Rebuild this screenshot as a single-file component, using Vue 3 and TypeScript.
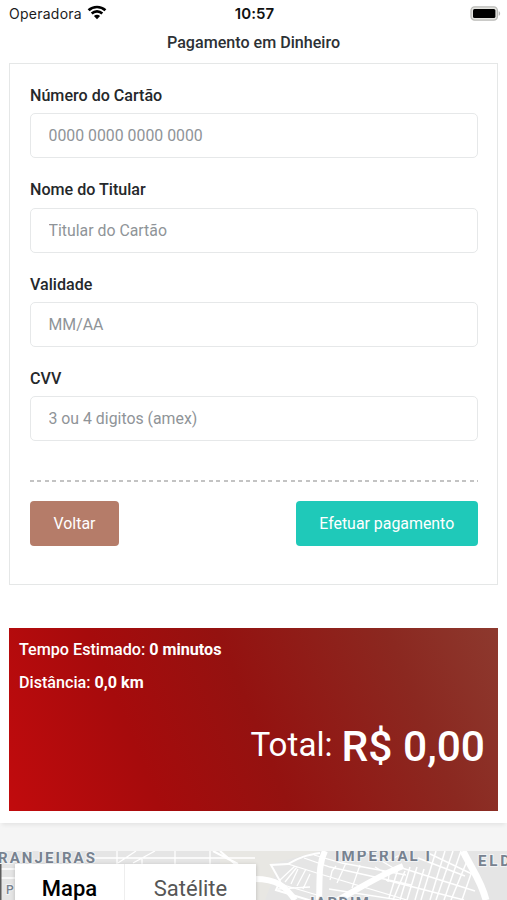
<script setup lang="ts">
import { ref } from 'vue'

interface Field {
  id: string
  label: string
  placeholder: string
}

const fields: Field[] = [
  { id: 'numero', label: 'Número do Cartão', placeholder: '0000 0000 0000 0000' },
  { id: 'titular', label: 'Nome do Titular', placeholder: 'Titular do Cartão' },
  { id: 'validade', label: 'Validade', placeholder: 'MM/AA' },
  { id: 'cvv', label: 'CVV', placeholder: '3 ou 4 digitos (amex)' },
]

const values = ref<Record<string, string>>({ numero: '', titular: '', validade: '', cvv: '' })
</script>

<template>
  <div class="screen">
    <header class="status">
      <div class="carrier">
        <span>Operadora</span>
        <svg class="wifi" width="20" height="15" viewBox="0 0 20 15" fill="none" stroke="#000">
          <path d="M1.600 5.300C6.200.9 13.800.9 18.400 5.300" stroke-width="2.700" />
          <path d="M4.700 8.500c3-2.900 7.600-2.900 10.600 0" stroke-width="2.600" />
          <path d="M10 14.200 6.900 11.100c1.800-1.700 4.400-1.700 6.200 0z" fill="#000" stroke="none" />
        </svg>
      </div>
      <span class="clock">10:57</span>
      <svg class="battery" width="31" height="15" viewBox="0 0 31 15">
        <rect x="1" y="0.900" width="26.400" height="13.200" rx="3.600" fill="#e4e4e0" stroke="#b9b9b6" stroke-width="1.300" />
        <rect x="3" y="3" width="22.400" height="9" rx="1.500" fill="#000" />
        <path d="M28.700 5.200c1.900.6 1.900 4 0 4.600z" fill="#b5b5b2" />
      </svg>
    </header>

    <main class="sheet">
      <h1 class="title">Pagamento em Dinheiro</h1>

      <form class="card" @submit.prevent>
        <div v-for="field in fields" :key="field.id" class="field">
          <label class="label" :for="field.id">{{ field.label }}</label>
          <input :id="field.id" v-model="values[field.id]" class="input" type="text" :placeholder="field.placeholder" />
        </div>
        <div class="rule"></div>
        <div class="actions">
          <button type="button" class="btn back">Voltar</button>
          <button type="submit" class="btn pay">Efetuar pagamento</button>
        </div>
      </form>

      <section class="summary">
        <p class="info">Tempo Estimado: <b>0 minutos</b></p>
        <p class="info">Distância: <b>0,0 km</b></p>
        <p class="total"><span class="total-label">Total:</span> <span class="amount">R$ 0,00</span></p>
      </section>
    </main>

    <section class="map">
      <svg class="streets" width="507" height="49" viewBox="0 0 507 49">
        <rect width="507" height="49" fill="#e5e5e5" />
        <path d="M220 0h100L271 13l4 10-10 26H220z" fill="#e8e7e3" />
        <g fill="none" stroke="#fff" stroke-width="1.300">
          <path d="M94 7h161M0 18h15M0 27h15M117 0v13M118 12l18-12M133 12l22-12M142 8v5M175 0v13M210 0v13" />
          <path d="M213 0l25 13M220 0l15 13" stroke-width="2" />
          <path d="M320 2c-13 2-20 4-32 11l-17 1 9 16-4 9 36 11" stroke-width="2" />
          <path d="M288 13l32 10 87 26M280 29l15-14M285 31l12-15M291 33l7-15M297 35l9-17M303 38l7-15M304 7l26 9 81 18M314 4l28 8 64 12M278 38l32-2M277 32l40 12M330 29l2-9 4-5M329 38l70 11M346 12l-9 20M360 14l-8 23M375 16l14 8-1 7M386 11l18-9M365 0l30 18" />
          <path d="M398 18l-9 29M405 20l-12 29M410 16l-10 33M417 16l-10 33M424 18l-9 31M436 0l-15 49M445 0l-15 49M453 0l-17 49M461 0l-17 49M467 10l-16 39M472 20l-10 29M386 29l78 20M402 17l73 23M426 1l46 22M418 7l47 18" stroke-width="1.500" />
        </g>
        <g fill="none" stroke="#fff">
          <path d="M325 0c-7 14-5 30-6 49" stroke-width="6" />
          <path d="M255 28c22 0 30 7 40 21M403 15C382 23 358 38 338 49" stroke-width="6" />
          <path d="M463 0c8 17 18 29 23 49" stroke-width="7" />
        </g>
        <path d="M0.500 0v49" stroke="#5d5d5d" stroke-width="2" />
        <g class="places">
          <text x="-2" y="11.500" textLength="97">RANJEIRAS</text>
          <text x="335" y="10" textLength="95">IMPERIAL I</text>
          <text x="478" y="15" textLength="45">ELDO</text>
          <text x="306" y="57" textLength="63">JARDIM</text>
          <text x="6" y="43" class="small">P</text>
        </g>
      </svg>
      <div class="map-types">
        <button type="button" class="map-type active">Mapa</button>
        <button type="button" class="map-type">Satélite</button>
      </div>
    </section>
  </div>
</template>

<style>
body {
  margin: 0;
  background: #f5f5f5;
  overflow: hidden;
}
</style>

<style scoped>
.screen {
  width: 507px;
  height: 900px;
  display: flex;
  flex-direction: column;
  overflow: hidden;
  background: #f5f5f5;
  color: #2d3135;
  font-family: Roboto, sans-serif;
}

.screen * {
  box-sizing: border-box;
}

.status {
  flex: none;
  height: 28px;
  padding: 0 6px 1px 9px;
  display: grid;
  grid-template-columns: 1fr auto 1fr;
  align-items: center;
  background: #fff;
  color: #1c1c1c;
  font-family: Inter, sans-serif;
  font-size: 14px;
}

.carrier {
  display: flex;
  align-items: center;
  gap: 5px;
  letter-spacing: 0.250px;
}

.wifi {
  margin-top: -2px;
}

.clock {
  margin-right: 1px;
  font-size: 15px;
  font-weight: 600;
  letter-spacing: 0.100px;
  color: #111;
}

.battery {
  justify-self: end;
}

.sheet {
  flex: none;
  height: 795px;
  padding: 0 9px;
  background: #fff;
  box-shadow: 0 4px 4px -2px rgba(0, 0, 0, 0.07);
}

.title {
  margin: 0;
  height: 35px;
  line-height: 29px;
  text-align: center;
  font-size: 16.100px;
  font-weight: 500;
}

.card {
  height: 522px;
  padding: 19px 19.500px 0 20px;
  border: 1.500px solid #e5e7e7;
}

.field {
  height: 94.300px;
}

.label {
  display: block;
  height: 30.300px;
  line-height: 26px;
  font-size: 16.100px;
  font-weight: 500;
  color: #25282b;
}

.input {
  display: block;
  width: 100%;
  height: 45px;
  padding: 0 17.500px;
  border: 1.500px solid #e6e8e9;
  border-radius: 5px;
  outline: none;
  background: #fff;
  font-family: inherit;
  font-size: 15.850px;
  color: #2d3135;
}

.input::placeholder {
  color: #8f9498;
  opacity: 1;
}

.rule {
  height: 1.500px;
  margin: 20px 0 19px;
  background: repeating-linear-gradient(90deg, #c3c3c3 0 4px, transparent 4px 7.450px);
}

.actions {
  display: flex;
  justify-content: space-between;
}

.btn {
  height: 45px;
  padding: 0;
  border: 0;
  border-radius: 4px;
  font-family: inherit;
  font-size: 15.900px;
  color: #fff;
}

.back {
  width: 89px;
  background: #b57c69;
}

.pay {
  width: 181.500px;
  background: #1fc9b9;
}

.summary {
  height: 183px;
  margin-top: 43px;
  padding: 5px 13px 0 10px;
  background: linear-gradient(68deg, #c10b0d 0%, #a60b0c 27%, #941210 50%, #8b2820 80%, #8d392e 100%);
  color: #fff;
}

.info {
  margin: 0;
  height: 33px;
  line-height: 33px;
  font-size: 16.150px;
  font-weight: 500;
}

.info b {
  font-weight: 700;
}

.total {
  display: flex;
  justify-content: flex-end;
  align-items: baseline;
  gap: 9px;
  margin: 23px 0 0;
  line-height: 50px;
}

.total-label {
  padding-bottom: 5px;
  transform: translateY(-5px);
  font-size: 33.200px;
}

.amount {
  font-size: 42.500px;
  font-weight: 500;
}

.map {
  position: relative;
  flex: none;
  height: 49px;
  margin-top: 28px;
  overflow: hidden;
}

.streets {
  display: block;
}

.places {
  font-size: 15px;
  font-weight: 700;
  fill: #778290;
  stroke: #f2f3f4;
  stroke-width: 2px;
  paint-order: stroke;
}

.small {
  font-size: 12px;
  font-weight: 500;
}

.map-types {
  position: absolute;
  top: 13px;
  left: 15px;
  display: flex;
  width: 241px;
  height: 60px;
  background: #fff;
  box-shadow: 0 1px 4px rgba(0, 0, 0, 0.2);
}

.map-type {
  width: 131px;
  height: 48px;
  padding: 0;
  border: 0;
  background: none;
  font-family: inherit;
  font-size: 22px;
  color: #565656;
}

.map-type.active {
  width: 110px;
  border-right: 1px solid #eee;
  font-weight: 500;
  color: #000;
}
</style>
